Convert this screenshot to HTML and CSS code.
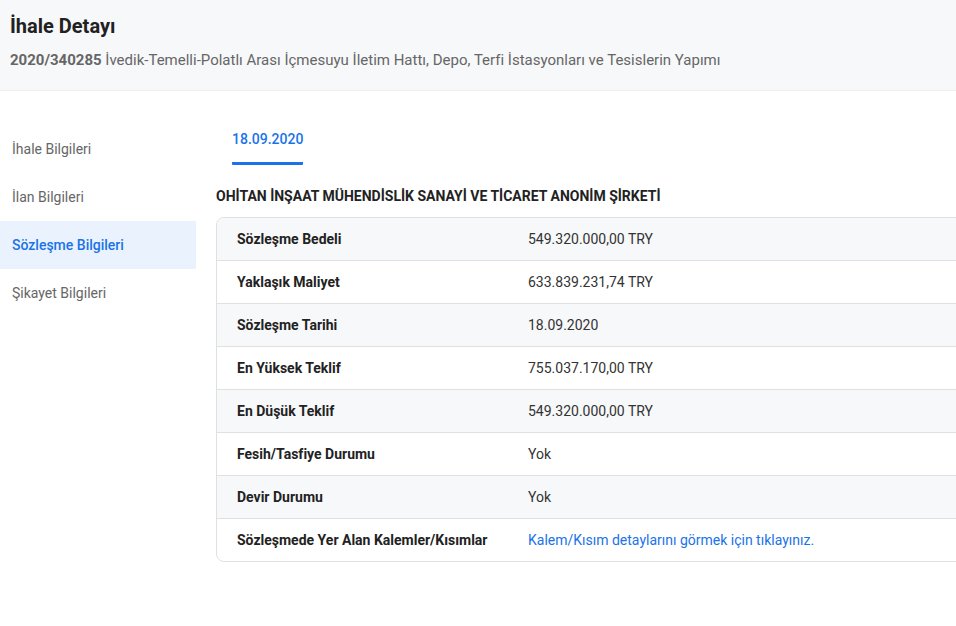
FILE: index.html
```html
<!DOCTYPE html>
<html lang="tr">
<head>
<meta charset="utf-8">
<title>İhale Detayı</title>
<link rel="stylesheet" href="styles.css">
</head>
<body>
<header class="page-header">
  <h1 class="title">İhale Detayı</h1>
  <p class="subtitle"><strong>2020/340285</strong> İvedik-Temelli-Polatlı Arası İçmesuyu İletim Hattı, Depo, Terfi İstasyonları ve Tesislerin Yapımı</p>
</header>
<div class="layout">
  <nav class="sidebar">
    <a class="nav-item">İhale Bilgileri</a>
    <a class="nav-item">İlan Bilgileri</a>
    <a class="nav-item active">Sözleşme Bilgileri</a>
    <a class="nav-item">Şikayet Bilgileri</a>
  </nav>
  <main class="content">
    <div class="tabs">
      <div class="tab active">18.09.2020</div>
    </div>
    <h2 class="company">OHİTAN İNŞAAT MÜHENDİSLİK SANAYİ VE TİCARET ANONİM ŞİRKETİ</h2>
    <div class="table">
      <div class="row"><div class="label">Sözleşme Bedeli</div><div class="value">549.320.000,00 TRY</div></div>
      <div class="row"><div class="label">Yaklaşık Maliyet</div><div class="value">633.839.231,74 TRY</div></div>
      <div class="row"><div class="label">Sözleşme Tarihi</div><div class="value">18.09.2020</div></div>
      <div class="row"><div class="label">En Yüksek Teklif</div><div class="value">755.037.170,00 TRY</div></div>
      <div class="row"><div class="label">En Düşük Teklif</div><div class="value">549.320.000,00 TRY</div></div>
      <div class="row"><div class="label">Fesih/Tasfiye Durumu</div><div class="value">Yok</div></div>
      <div class="row"><div class="label">Devir Durumu</div><div class="value">Yok</div></div>
      <div class="row"><div class="label">Sözleşmede Yer Alan Kalemler/Kısımlar</div><div class="value"><a class="link">Kalem/Kısım detaylarını görmek için tıklayınız.</a></div></div>
    </div>
  </main>
</div>
</body>
</html>
```
FILE: styles.css
```css
* { box-sizing: border-box; }
html, body { margin: 0; padding: 0; }
body {
  font-family: Roboto, "Liberation Sans", Arial, sans-serif;
  background: #ffffff;
  color: #222;
  width: 956px;
  height: 626px;
  overflow: hidden;
}
.page-header {
  background: #f7f8fa;
  border-bottom: 1px solid #eceef1;
  height: 91px;
  padding: 12px 10px 0;
}
.title {
  margin: 0;
  font-size: 20px;
  font-weight: 700;
  color: #212121;
  line-height: 28px;
}
.subtitle {
  margin: 10px 0 0;
  font-size: 15px;
  color: #666;
  line-height: 20px;
}
.subtitle strong { color: #666; font-weight: 700; }
.layout {
  display: flex;
  padding-top: 34px;
  overflow: hidden;
}
.sidebar {
  width: 196px;
  flex: none;
  display: flex;
  flex-direction: column;
}
.nav-item {
  display: flex;
  align-items: center;
  height: 48px;
  padding-left: 12px;
  font-size: 14px;
  color: #666;
}
.nav-item.active {
  background: #eaf2fd;
  color: #1a73e8;
  font-weight: 500;
}
.content {
  flex: 1;
  min-width: 0;
  margin-left: 20px;
}
.tabs {
  display: flex;
  padding-left: 16px;
  margin-top: -10px;
}
.tab {
  font-size: 14px;
  font-weight: 500;
  color: #1a73e8;
  padding: 16px 0 14px;
  line-height: 17px;
  border-bottom: 3px solid #1a73e8;
  border-radius: 0 0 1px 1px;
}
.company {
  margin: 22px 0 0;
  font-size: 14px;
  font-weight: 700;
  color: #222;
  line-height: 18px;
}
.table {
  margin-top: 12px;
  margin-right: -12px;
  border: 1px solid #e0e0e0;
  border-radius: 8px;
  overflow: hidden;
}
.row {
  display: grid;
  grid-template-columns: 311px 1fr;
  height: 43px;
  align-items: center;
  border-top: 1px solid #e0e0e0;
  font-size: 14px;
}
.row:first-child { border-top: none; height: 42px; }
.row:nth-child(odd) { background: #f7f8fa; }
.label {
  padding-left: 20px;
  font-weight: 700;
  color: #222;
}
.value { color: #333; }
.link { color: #1a73e8; }
```
